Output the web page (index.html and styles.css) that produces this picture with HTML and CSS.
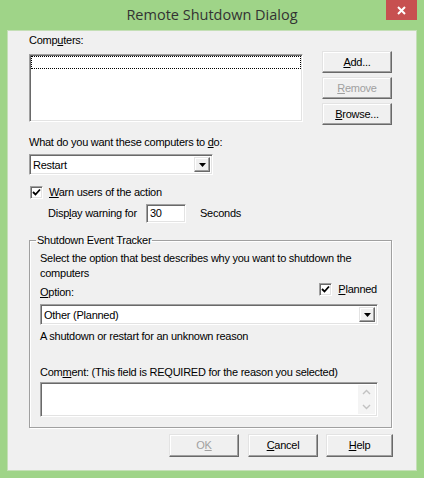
FILE: index.html
```html
<!DOCTYPE html>
<html>
<head>
<meta charset="utf-8">
<link rel="stylesheet" href="styles.css">
</head>
<body>
<div class="window">
  <div class="titlebar">
    <div class="spacer"></div>
    <div class="title">Remote Shutdown Dialog</div>
    <div class="close">
      <svg width="9" height="9" viewBox="0 0 9 9"><path d="M1 1 L8 8 M8 1 L1 8" stroke="#fff" stroke-width="2" fill="none"/></svg>
    </div>
  </div>
  <div class="client">
    <div class="top">
      <div class="computers">
        <div class="line">Comp<u>u</u>ters:</div>
        <div class="listbox sunken"><div class="focus"></div></div>
      </div>
      <div class="side-buttons">
        <div class="btn"><span><u>A</u>dd...</span></div>
        <div class="btn disabled"><span><u>R</u>emove</span></div>
        <div class="btn"><span><u>B</u>rowse...</span></div>
      </div>
    </div>
    <div class="line question">What do you want these computers to <u>d</u>o:</div>
    <div class="combo sunken action">
      <span class="combo-text">Restart</span>
      <span class="drop"><svg width="7" height="4" viewBox="0 0 7 4"><polygon points="0,0 7,0 3.5,4" fill="#000"/></svg></span>
    </div>
    <div class="check-row warn">
      <span class="checkbox sunken"><svg width="9" height="9" viewBox="0 0 9 9"><path d="M1 4 L3.5 6.5 L8 1.5" stroke="#000" stroke-width="1.8" fill="none"/></svg></span>
      <span class="line"><u>W</u>arn users of the action</span>
    </div>
    <div class="warn-row">
      <span class="line display">Disp<u>l</u>ay warning for</span>
      <span class="field sunken">30</span>
      <span class="line seconds">Seconds</span>
    </div>
    <fieldset class="tracker">
      <legend>Shutdown Event Tracker</legend>
      <p class="desc">Select the option that best describes why you want to shutdown the<br>computers</p>
      <div class="option-row">
        <span class="line option"><u>O</u>ption:</span>
        <span class="check-row planned">
          <span class="checkbox sunken"><svg width="9" height="9" viewBox="0 0 9 9"><path d="M1 4 L3.5 6.5 L8 1.5" stroke="#000" stroke-width="1.8" fill="none"/></svg></span>
          <span class="line"><u>P</u>lanned</span>
        </span>
      </div>
      <div class="combo sunken reason">
        <span class="combo-text">Other (Planned)</span>
        <span class="drop"><svg width="7" height="4" viewBox="0 0 7 4"><polygon points="0,0 7,0 3.5,4" fill="#000"/></svg></span>
      </div>
      <div class="line reason-text">A shutdown or restart for an unknown reason</div>
      <div class="line comment-label">Com<u>m</u>ent: (This field is REQUIRED for the reason you selected)</div>
      <div class="comment sunken">
        <div class="comment-area"></div>
        <div class="scroll">
          <svg width="9" height="6" viewBox="0 0 9 6"><path d="M1 5 L4.5 1.5 L8 5" stroke="#c2c2c2" stroke-width="1.4" fill="none"/></svg>
          <svg width="9" height="6" viewBox="0 0 9 6"><path d="M1 1 L4.5 4.5 L8 1" stroke="#c2c2c2" stroke-width="1.4" fill="none"/></svg>
        </div>
      </div>
    </fieldset>
    <div class="footer">
      <div class="btn big disabled"><span>O<u>K</u></span></div>
      <div class="btn big"><span><u>C</u>ancel</span></div>
      <div class="btn big help"><span><u>H</u>elp</span></div>
    </div>
  </div>
</div>
</body>
</html>
```
FILE: styles.css
```css
html, body {
  margin: 0;
  padding: 0;
}
body {
  width: 424px;
  height: 478px;
  overflow: hidden;
  font-family: "Liberation Sans", Arial, sans-serif;
  font-size: 11px;
  letter-spacing: -0.25px;
  color: #000;
}
.window {
  width: 424px;
  height: 478px;
  box-sizing: border-box;
  background: #9fd488;
  padding: 0 7px 7px 7px;
  display: flex;
  flex-direction: column;
}
.titlebar {
  height: 30px;
  display: flex;
  flex-shrink: 0;
}
.spacer {
  width: 31px;
}
.title {
  flex: 1;
  text-align: center;
  font-family: "Open Sans", "Noto Sans", sans-serif;
  font-size: 14.5px;
  letter-spacing: 0;
  line-height: 30px;
  color: #333;
}
.close {
  width: 31px;
  height: 20px;
  background: #c75050;
  display: flex;
  align-items: center;
  justify-content: center;
}
.client {
  flex: 1;
  background: #f0f0f0;
  border: 1px solid #c4dfb6;
  padding: 3px 0 0 21px;
  display: flex;
  flex-direction: column;
  align-items: flex-start;
}
.line {
  line-height: 13px;
  white-space: nowrap;
}
.sunken {
  box-sizing: border-box;
  background: #fff;
  border: 1px solid;
  border-color: #a0a0a0 #fff #fff #a0a0a0;
  box-shadow: inset 1px 1px 0 #696969, inset -1px -1px 0 #e3e3e3;
}
.btn {
  box-sizing: border-box;
  width: 70px;
  height: 22px;
  background: #f0f0f0;
  border: 1px solid;
  border-color: #e3e3e3 #696969 #696969 #e3e3e3;
  box-shadow: inset -1px -1px 0 #a0a0a0, inset 1px 1px 0 #fff;
  display: flex;
  align-items: center;
  justify-content: center;
  line-height: 13px;
}
.btn.disabled {
  color: #a0a0a0;
}
.top {
  display: flex;
  gap: 19px;
  align-items: flex-start;
}
.computers {
  display: flex;
  flex-direction: column;
}
.listbox {
  margin-top: 7px;
  width: 274px;
  height: 68px;
  padding: 1px;
}
.focus {
  box-sizing: border-box;
  width: 270px;
  height: 13px;
  border: 1px dotted #000;
}
.side-buttons {
  margin-top: 17px;
  display: flex;
  flex-direction: column;
  gap: 4px;
}
.question {
  margin-top: 11px;
}
.combo {
  display: flex;
  align-items: stretch;
  height: 21px;
  padding: 2px;
}
.combo-text {
  flex: 1;
  padding-left: 1px;
  line-height: 17px;
}
.drop {
  width: 16px;
  box-sizing: border-box;
  background: #f0f0f0;
  border: 1px solid;
  border-color: #e3e3e3 #696969 #696969 #e3e3e3;
  box-shadow: inset -1px -1px 0 #a0a0a0, inset 1px 1px 0 #fff;
  display: flex;
  align-items: center;
  justify-content: center;
}
.action {
  margin-top: 5px;
  width: 184px;
}
.check-row {
  display: flex;
  align-items: center;
  gap: 6px;
}
.warn {
  margin-top: 11px;
  padding-left: 1px;
}
.checkbox {
  width: 13px;
  height: 13px;
  display: flex;
  align-items: center;
  justify-content: center;
}
.warn-row {
  margin-top: 5px;
  padding-left: 19px;
  display: flex;
  align-items: center;
}
.display {
  width: 98px;
}
.field {
  width: 40px;
  height: 19px;
  line-height: 17px;
  padding-left: 3px;
}
.seconds {
  margin-left: 14px;
}
.tracker {
  margin: 11px 0 0 0;
  width: 363px;
  box-sizing: border-box;
  padding: 4px 13px 10px 10px;
  border: 1px solid #a0a0a0;
  box-shadow: 1px 1px 0 #fff, inset 1px 1px 0 #fff;
  min-width: 0;
}
.tracker legend {
  margin-left: -4px;
  padding: 0 1px;
  line-height: 13px;
}
.desc {
  margin: 0;
  line-height: 15px;
}
.option-row {
  margin-top: 2px;
  display: flex;
  justify-content: space-between;
  align-items: flex-start;
  height: 16px;
}
.option {
  margin-top: 3px;
}
.planned {
  margin-right: 1px;
}
.reason {
  margin-top: 5px;
  width: 338px;
}
.reason-text {
  margin-top: 5px;
}
.comment-label {
  margin-top: 23px;
}
.comment {
  margin-top: 3px;
  width: 338px;
  height: 35px;
  padding: 2px;
  display: flex;
}
.comment-area {
  flex: 1;
}
.scroll {
  width: 17px;
  background: #f4f4f4;
  display: flex;
  flex-direction: column;
  align-items: center;
  justify-content: space-around;
}
.footer {
  margin-top: 6px;
  align-self: stretch;
  display: flex;
  justify-content: flex-end;
  padding-right: 23px;
  gap: 8px;
}
.btn.big {
  height: 23px;
}
.btn.help {
  width: 67px;
}
.footer .disabled {
  margin-right: 1px;
}
```
